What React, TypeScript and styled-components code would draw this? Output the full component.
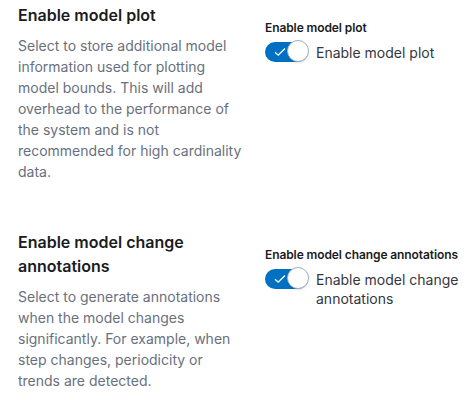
import React from "react";
import styled, { createGlobalStyle } from "styled-components";

const Global = createGlobalStyle`
  html, body { margin: 0; padding: 0; background: #ffffff; }
  body { font-family: Inter, "Noto Sans", sans-serif; -webkit-font-smoothing: antialiased; }
`;

const Page = styled.div`
  padding: 3px 10px 0 18px;
  display: flex;
  flex-direction: column;
  gap: 48px;
`;

const Group = styled.div`
  display: grid;
  grid-template-columns: 228px 1fr;
  column-gap: 19px;
`;

const Describe = styled.div`
  display: flex;
  flex-direction: column;
  gap: 8px;
`;

const Title = styled.h3`
  margin: 0;
  font-size: 16px;
  line-height: 24px;
  font-weight: 600;
  color: #1a1c21;
`;

const Desc = styled.p`
  margin: 0;
  font-size: 14px;
  line-height: 21px;
  color: #69707d;
`;

const Field = styled.div`
  padding-top: 16px;
  display: flex;
  flex-direction: column;
  gap: 3px;
`;

const Label = styled.div`
  font-size: 12px;
  line-height: 18px;
  font-weight: 600;
  letter-spacing: -0.1px;
  color: #1a1c21;
`;

const SwitchRow = styled.label`
  display: flex;
  align-items: flex-start;
  gap: 8px;
`;

const Track = styled.span`
  position: relative;
  flex: none;
  width: 43px;
  height: 20px;
  margin-top: 2px;
  border-radius: 10px;
  background: #0071c2;
`;

const Thumb = styled.span`
  position: absolute;
  top: -2px;
  right: -1px;
  width: 22px;
  height: 22px;
  box-sizing: border-box;
  border-radius: 50%;
  background: #ffffff;
  border: 1px solid #a6b0bd;
  box-shadow: 0 1px 2px rgba(0, 0, 0, 0.12);
`;

const Check = styled.svg`
  position: absolute;
  left: 9px;
  top: 5px;
`;

const SwitchText = styled.span`
  font-size: 14px;
  line-height: 19px;
  color: #343741;
  padding-top: 3px;
`;

const Switch = ({ label }: { label: string }) => (
  <SwitchRow>
    <Track>
      <Check width="12" height="10" viewBox="0 0 12 10">
        <path d="M1 5.2 L4.2 8.2 L11 1.5" fill="none" stroke="#fff" strokeWidth="1.3" />
      </Check>
      <Thumb />
    </Track>
    <SwitchText>{label}</SwitchText>
  </SwitchRow>
);

const sections = [
  {
    title: "Enable model plot",
    desc:
      "Select to store additional model information used for plotting model bounds. This will add overhead to the performance of the system and is not recommended for high cardinality data.",
    label: "Enable model plot",
  },
  {
    title: "Enable model change annotations",
    desc:
      "Select to generate annotations when the model changes significantly. For example, when step changes, periodicity or trends are detected.",
    label: "Enable model change annotations",
  },
];

export default function App() {
  return (
    <>
      <Global />
      <Page>
        {sections.map((s) => (
          <Group key={s.title}>
            <Describe>
              <Title>{s.title}</Title>
              <Desc>{s.desc}</Desc>
            </Describe>
            <Field>
              <Label>{s.label}</Label>
              <Switch label={s.label} />
            </Field>
          </Group>
        ))}
      </Page>
    </>
  );
}
